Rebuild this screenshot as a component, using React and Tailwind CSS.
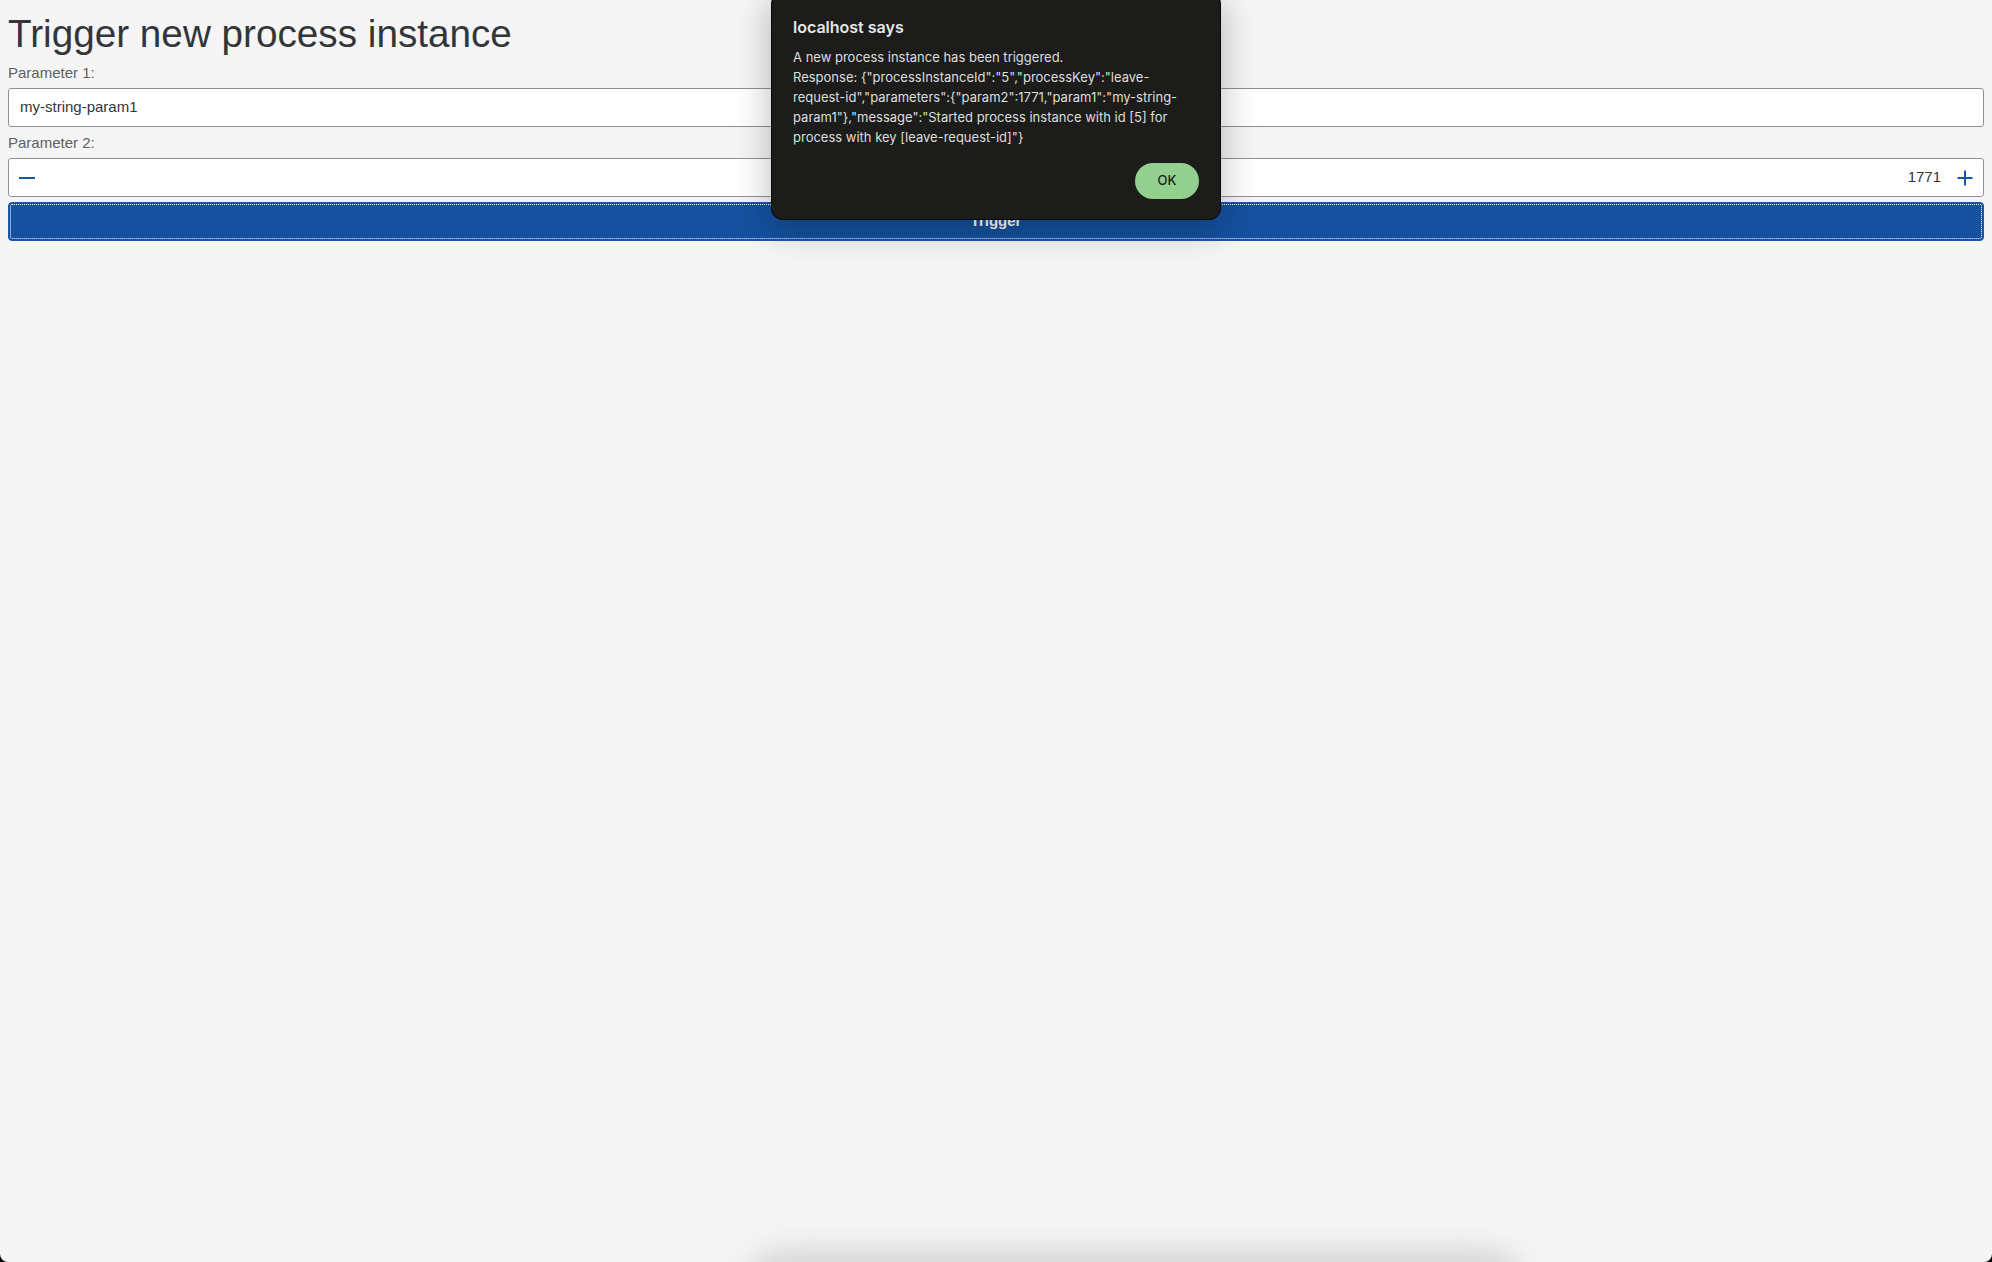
import React from 'react';

function MinusIcon() {
  return (
    <svg width="16" height="16" viewBox="0 0 16 16" className="shrink-0">
      <line x1="0" y1="8" x2="16" y2="8" stroke="#1a55a0" strokeWidth="2" />
    </svg>
  );
}

function PlusIcon() {
  return (
    <svg width="16" height="16" viewBox="0 0 16 16" className="shrink-0">
      <line x1="0.5" y1="8" x2="15.5" y2="8" stroke="#1a55a0" strokeWidth="2" />
      <line x1="8" y1="0.5" x2="8" y2="15.5" stroke="#1a55a0" strokeWidth="2" />
    </svg>
  );
}

export default function App() {
  const lines = [
    'A new process instance has been triggered.',
    'Response: {"processInstanceId":"5","processKey":"leave-',
    'request-id","parameters":{"param2":1771,"param1":"my-string-',
    'param1"},"message":"Started process instance with id [5] for',
    'process with key [leave-request-id]"}',
  ];
  return (
    <div className="h-[1262px] w-full bg-black">
      <div className="relative h-full w-full overflow-hidden rounded-b-[8px] bg-[#f5f5f5] font-['Liberation_Sans',Arial,sans-serif]">
        <div className="flex flex-col px-[8px] pt-[12px]">
          <h1 className="text-[38.7px] leading-[44px] font-normal text-[#32363a]">Trigger new process instance</h1>
          <label className="mt-[8px] text-[15px] leading-[18px] text-[#5b6066]">Parameter 1:</label>
          <div className="mt-[6px] flex h-[39px] items-center rounded-[3px] border border-[#89919a] bg-white pl-[11px] text-[15px] text-[#32363a]">
            my-string-param1
          </div>
          <label className="mt-[7px] text-[15px] leading-[18px] text-[#5b6066]">Parameter 2:</label>
          <div className="mt-[6px] flex h-[39px] items-center rounded-[3px] border border-[#89919a] bg-white pl-[10px] pr-[10px] text-[15px] text-[#32363a]">
            <MinusIcon />
            <div className="flex-1 text-right">1771</div>
            <div className="w-[16px] shrink-0" />
            <PlusIcon />
          </div>
          <button className="mt-[5px] flex h-[39px] items-center justify-center rounded-[4px] border border-[#1a58a8] bg-[#15519f] text-[15px] font-bold text-white outline-1 outline-dotted outline-white outline-offset-[-3px]">
            Trigger
          </button>
        </div>

        <div className="absolute left-[771px] top-[-8px] w-[450px] rounded-[12px] border border-black/70 bg-[#1c1d1b] px-[21px] pt-[24px] pb-[20px] font-['Inter',sans-serif] shadow-[0_8px_36px_rgba(0,0,0,0.28)]">
          <div className="text-[16px] leading-[20px] font-semibold text-[#e6e6e6]">localhost says</div>
          <div className="mt-[10px] text-[13px] leading-[20px] text-[#dedede] whitespace-nowrap">
            {lines.map((l, i) => (
              <div key={i}>{l}</div>
            ))}
          </div>
          <div className="mt-[16px] flex justify-end">
            <button className="flex h-[36px] w-[64px] items-center justify-center rounded-full bg-[#93cf8e] text-[13px] font-medium text-[#17251a]">
              OK
            </button>
          </div>
        </div>

        <div className="absolute left-[745px] top-[1250px] h-[90px] w-[780px] rounded-[40px] bg-[#d4d4d4] blur-[14px]" />
      </div>
    </div>
  );
}
